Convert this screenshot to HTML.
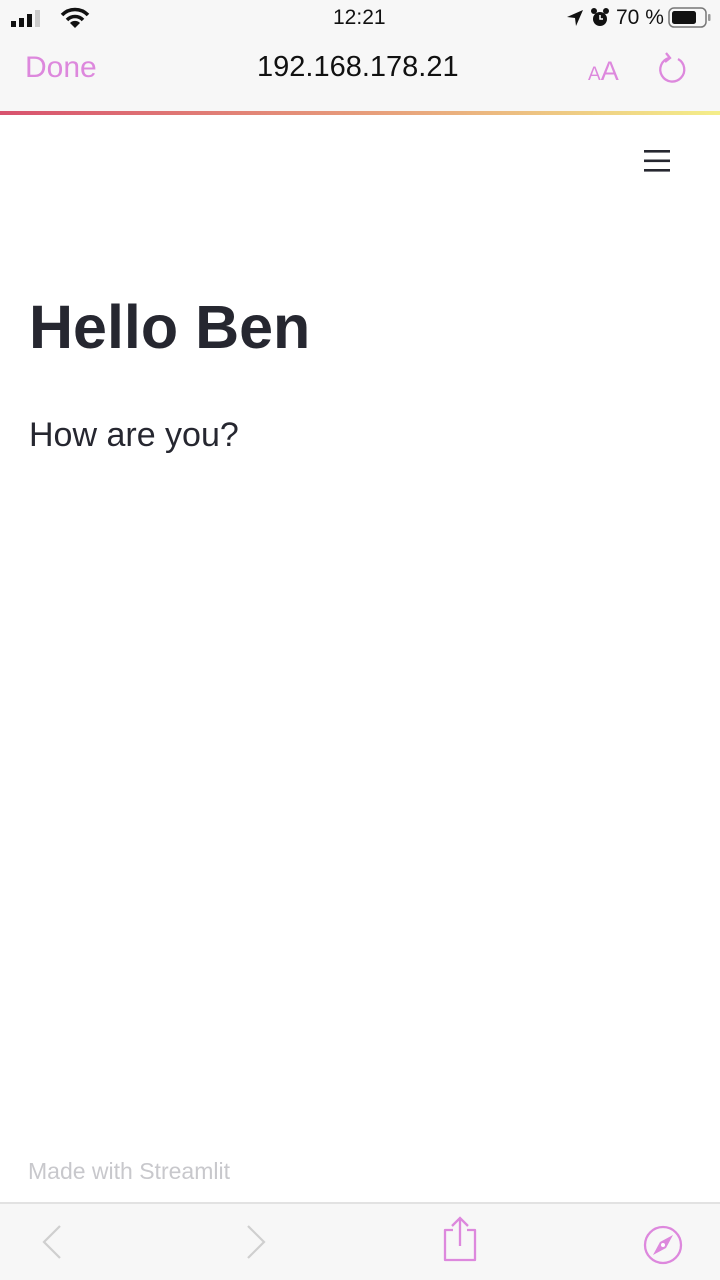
<!DOCTYPE html>
<html><head><meta charset="utf-8"><style>
*{margin:0;padding:0;box-sizing:border-box}
body{width:720px;height:1280px;overflow:hidden;background:#fff;font-family:"Liberation Sans",sans-serif;position:relative}
.top{position:absolute;left:0;top:0;width:720px;height:111px;background:#f7f7f7}
.grad{position:absolute;left:0;top:111px;width:720px;height:4px;background:linear-gradient(90deg,#d8526e,#e8a37c 55%,#f4ee8a)}
.t{position:absolute;white-space:nowrap}
.bot{position:absolute;left:0;top:1202px;width:720px;height:78px;background:#f7f7f7;border-top:2px solid #e2e2e2}
</style></head><body>
<div class="top">
  <svg class="t" style="left:10px;top:10px" width="34" height="18"><rect x="1" y="11" width="5" height="6" fill="#111"/><rect x="9" y="8" width="5" height="9" fill="#111"/><rect x="17" y="4" width="5" height="13" fill="#111"/><rect x="25" y="0" width="5" height="17" fill="#ccc"/></svg>
  <svg class="t" style="left:60px;top:7px" width="30" height="22" viewBox="0 0 30 22"><path d="M2 8 A18 18 0 0 1 28 8" stroke="#111" stroke-width="3.5" fill="none"/><path d="M7 13 A11 11 0 0 1 23 13" stroke="#111" stroke-width="3.5" fill="none"/><path d="M15 21 L10 16 A7 7 0 0 1 20 16 Z" fill="#111"/></svg>
  <div class="t" style="left:333px;top:6px;font-size:21px;color:#111">12:21</div>
  <svg class="t" style="left:566px;top:9px" width="18" height="18"><path d="M17 1 L1 8 L9 9 L10 17 Z" fill="#111"/></svg>
  <svg class="t" style="left:590px;top:8px" width="20" height="20"><circle cx="10" cy="11" r="7" fill="#111"/><circle cx="4" cy="3" r="3" fill="#111"/><circle cx="16" cy="3" r="3" fill="#111"/><path d="M10 7v4h3" stroke="#fff" stroke-width="1.5" fill="none"/></svg>
  <div class="t" style="left:616px;top:6px;font-size:21px;color:#111">70 %</div>
  <svg class="t" style="left:668px;top:7px" width="44" height="22"><rect x="1" y="1" width="37" height="19" rx="5" fill="none" stroke="#777" stroke-width="1.5"/><rect x="4" y="4" width="24" height="13" rx="2.5" fill="#111"/><rect x="40" y="7" width="2.5" height="7" rx="1" fill="#999"/></svg>
  <div class="t" style="left:25px;top:51px;font-size:30px;color:#dd88dd">Done</div>
  <div class="t" style="left:257px;top:51px;font-size:29px;color:#111">192.168.178.21</div>
  <div class="t" style="left:588px;top:56px;color:#dd88dd"><span style="font-size:19px">A</span><span style="font-size:27px">A</span></div>
  <svg class="t" style="left:656px;top:52px" width="34" height="34" viewBox="0 0 34 34"><path d="M22 7 A12 12 0 1 1 13 6" stroke="#dd88dd" stroke-width="2.3" fill="none"/><path d="M10 1 L14 6 L9 10" stroke="#dd88dd" stroke-width="2.3" fill="none"/></svg>
</div>
<div class="grad"></div>
<svg class="t" style="left:644px;top:149px" width="26" height="24"><rect y="1" width="26" height="2.6" fill="#262730"/><rect y="10.5" width="26" height="2.6" fill="#262730"/><rect y="20" width="26" height="2.6" fill="#262730"/></svg>
<div class="t" style="left:29px;top:292px;font-size:61px;font-weight:bold;color:#262730">Hello Ben</div>
<div class="t" style="left:29px;top:416px;font-size:34px;color:#262730">How are you?</div>
<div class="t" style="left:28px;top:1158px;font-size:23px;color:#c8c8cc">Made with Streamlit</div>
<div class="bot">
  <svg class="t" style="left:40px;top:20px" width="24" height="36"><path d="M20 2 L4 18 L20 34" stroke="#cfcfcf" stroke-width="2.2" fill="none"/></svg>
  <svg class="t" style="left:244px;top:20px" width="24" height="36"><path d="M4 2 L20 18 L4 34" stroke="#cfcfcf" stroke-width="2.2" fill="none"/></svg>
  <svg class="t" style="left:440px;top:12px" width="40" height="46"><path d="M13 14 H5 V44 H35 V14 H27" stroke="#dd88dd" stroke-width="2.3" fill="none" stroke-linejoin="round"/><path d="M20 2 V30 M12 10 L20 2 L28 10" stroke="#dd88dd" stroke-width="2.3" fill="none"/></svg>
  <svg class="t" style="left:642px;top:20px" width="42" height="42"><circle cx="21" cy="21" r="18" stroke="#dd88dd" stroke-width="2.3" fill="none"/><path d="M31 11 L24 24 L11 31 L18 18 Z" fill="#dd88dd"/><circle cx="21" cy="21" r="2" fill="#fff"/></svg>
</div>
</body></html>
